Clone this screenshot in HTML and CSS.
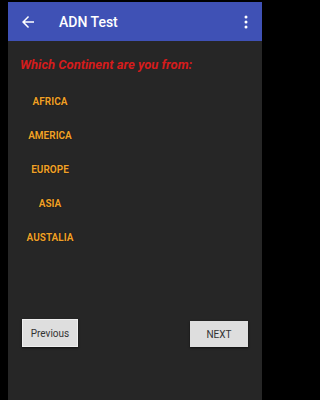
FILE: index.html
```html
<!DOCTYPE html>
<html>
<head>
<meta charset="utf-8">
<link rel="stylesheet" href="styles.css">
</head>
<body>
<div class="phone">
  <div class="appbar">
    <svg class="back" width="18" height="18" viewBox="0 0 24 24"><path d="M20 11H7.83l5.59-5.59L12 4l-8 8 8 8 1.41-1.41L7.83 13H20v-2z" fill="#fff"/></svg>
    <span class="apptitle">ADN Test</span>
    <svg class="menu" width="4" height="14" viewBox="0 0 4 14"><circle cx="2" cy="2" r="1.5" fill="#fff"/><circle cx="2" cy="7" r="1.5" fill="#fff"/><circle cx="2" cy="12" r="1.5" fill="#fff"/></svg>
  </div>
  <div class="content">
    <div class="question">Which Continent are you from:</div>
    <div class="options">
      <div class="option">AFRICA</div>
      <div class="option">AMERICA</div>
      <div class="option">EUROPE</div>
      <div class="option">ASIA</div>
      <div class="option">AUSTALIA</div>
    </div>
    <div class="buttons">
      <div class="btn prev">Previous</div>
      <div class="btn next">NEXT</div>
    </div>
  </div>
</div>
</body>
</html>
```
FILE: styles.css
```css
html, body {
  margin: 0;
  padding: 0;
  background: #000;
  width: 274px;
  height: 400px;
  overflow: hidden;
  font-family: Roboto, "Liberation Sans", sans-serif;
}
.phone {
  margin-left: 8px;
  width: 254px;
  height: 398px;
  padding-top: 2px;
  display: flex;
  flex-direction: column;
}
.appbar {
  height: 39px;
  background: #3f51b5;
  display: flex;
  align-items: center;
  padding-left: 11px;
  padding-right: 14px;
  flex-shrink: 0;
}
.back {
  display: block;
}
.apptitle {
  margin-left: 22px;
  color: #fff;
  font-size: 14px;
  font-weight: 500;
  flex: 1;
}
.menu {
  display: block;
}
.content {
  flex: 1;
  background: #262626;
  padding-top: 16px;
}
.question {
  margin-left: 12px;
  color: #d41c1c;
  font-size: 13px;
  font-weight: bold;
  font-style: italic;
  line-height: 16px;
}
.options {
  margin-top: 12px;
  margin-left: 12px;
}
.option {
  width: 60px;
  height: 34px;
  line-height: 34px;
  text-align: center;
  color: #eea02a;
  font-size: 10px;
  font-weight: bold;
  text-shadow: 0 0 1px #000;
}
.buttons {
  margin-top: 64px;
  display: flex;
  justify-content: space-between;
  align-items: flex-end;
  padding: 0 14px;
}
.btn {
  background: #dedede;
  color: #333;
  font-size: 10px;
  display: flex;
  align-items: center;
  justify-content: center;
  box-shadow: 0 1px 2px rgba(0,0,0,0.6);
}
.prev {
  width: 56px;
  height: 28px;
  border: 1px solid #eee;
  box-sizing: border-box;
}
.next {
  width: 58px;
  height: 26px;
}
```
